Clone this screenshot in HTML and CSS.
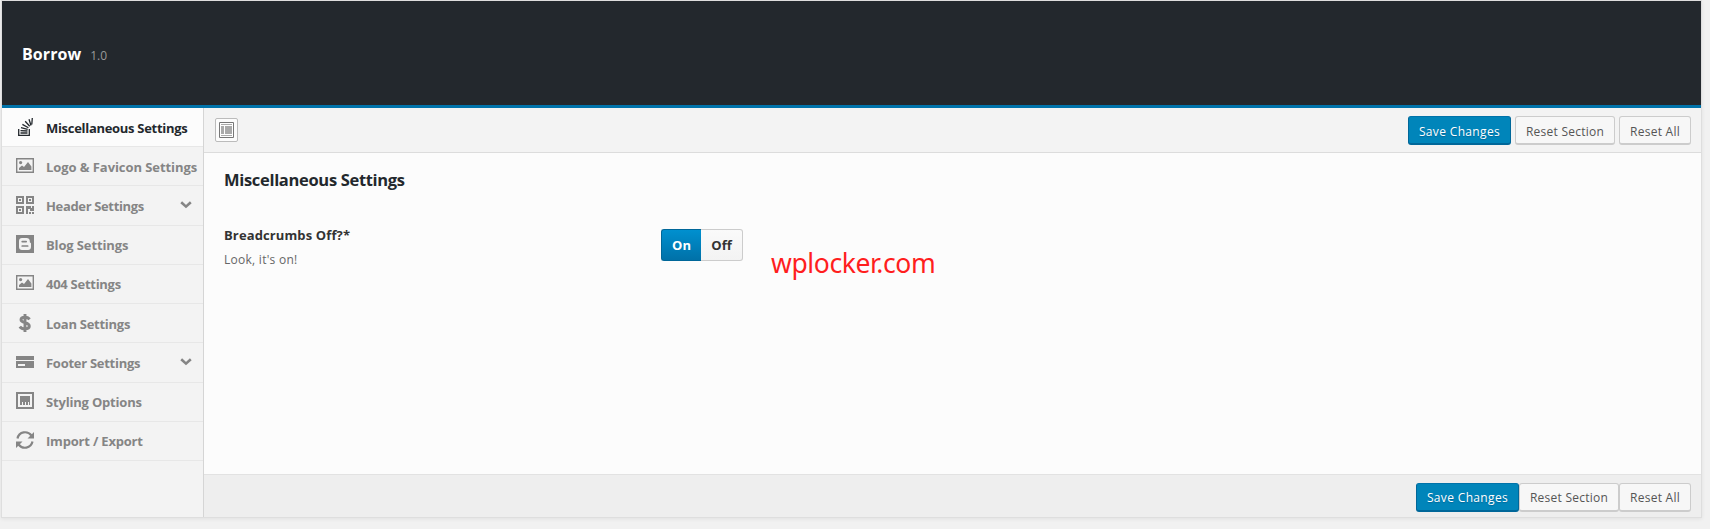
FILE: index.html
```html
<!DOCTYPE html>
<html lang="en">
<head>
<meta charset="utf-8">
<title>Borrow</title>
<link rel="stylesheet" href="styles.css">
</head>
<body>
<svg class="defs" width="0" height="0">
  <symbol id="picture" viewBox="0 0 18 16"><path fill-rule="evenodd" d="M0 0h18v15H0zM1.4 1.4v12.2h15.2V1.4z"/><circle cx="4.6" cy="4.6" r="1.6"/><path d="M3 12V10l3-2.4 2 1.4 4-5 3.4 4.6V12z"/></symbol>
  <symbol id="chevron" viewBox="0 0 12 8"><path d="M1.2 1.2 6 5.6l4.800-4.400" fill="none" stroke="currentColor" stroke-width="2.600"/></symbol>
</svg>
<div class="panel">
  <header class="top"><h1>Borrow</h1><span class="version">1.0</span></header>
  <div class="body">
    <ul class="menu">
      <li class="active"><svg class="icon" viewBox="0 0 18 18"><path d="M2.700 11v6.300h10.600V11M4.500 15h7M4.500 12.700l7 .3M5 9.700l6.700 1.700M6.400 6.400l6 3.300M9.200 3.200l4.500 5M13 1.200l2 6.300M16.300 0l-.5 6.500" fill="none" stroke="currentColor" stroke-width="1.300"/></svg><span class="m1">Miscellaneous Settings</span></li>
      <li><svg class="icon"><use href="#picture" width="18" height="16" y="1"/></svg><span class="m2">Logo &amp; Favicon Settings</span></li>
      <li><svg class="icon" viewBox="0 0 18 18"><path fill-rule="evenodd" d="M0 0h8v8H0zM2 2v4h4V2zM10 0h8v8h-8zM12 2v4h4V2zM0 10h8v8H0zM2 12v4h4v-4zM3 3h2v2H3zM13 3h2v2h-2zM3 13h2v2H3zM10 10h5v2h1v-2h2v5h-4v-2h-2v5h-2zM13 16h2v2h-2zM16 16h2v2h-2z"/></svg><span class="m3">Header Settings</span><svg class="chevron"><use href="#chevron"/></svg></li>
      <li><svg class="icon" viewBox="0 0 18 18"><path d="M0 0h18v18H0z"/><path class="cut" d="M6 3h4.500c2 0 3.300 1.300 3.300 3v1c0 .8 1.200.5 1.200 1.500V12c0 1.900-1.300 3-3 3H6c-1.800 0-3-1.200-3-3V6c0-1.800 1.200-3 3-3z"/><path d="M6.200 6.600h4M6.200 11h5.500" stroke="currentColor" stroke-width="1.700" stroke-linecap="round"/></svg><span class="m4">Blog Settings</span></li>
      <li><svg class="icon"><use href="#picture" width="18" height="16" y="1"/></svg><span class="m5">404 Settings</span></li>
      <li><svg class="icon" viewBox="0 0 18 18"><path d="M13.700 5.200C12.500 3.900 11 3.200 9 3.200c-2.300 0-4 .9-4 2.600 0 3.800 8.300 2 8.300 6.200 0 1.900-1.800 2.900-4.300 2.900-2.200 0-4.100-.7-5.200-2.300M9 0v18" fill="none" stroke="currentColor" stroke-width="2.900"/></svg><span class="m6">Loan Settings</span></li>
      <li><svg class="icon" viewBox="0 0 18 18"><path fill-rule="evenodd" d="M0 3h18v4H0zM0 8h18v7H0zM2 11v2h7v-2z"/></svg><span class="m7">Footer Settings</span><svg class="chevron"><use href="#chevron"/></svg></li>
      <li><svg class="icon" viewBox="0 0 18 18"><path fill-rule="evenodd" d="M0 0h18v17H0zM2 2v13h14V2z"/><path d="M4 4h10v9h-1v-3h-1v3h-2v-3H9v3H7v-3H6v3H4z"/></svg><span class="m8">Styling Options</span></li>
      <li><svg class="icon" viewBox="0 0 18 18"><path d="M1.500 7.500C3 .4 11.500-.6 15.500 4.500M16.500 10.500C15 17.600 6.500 18.600 2.500 13.500" fill="none" stroke="currentColor" stroke-width="2.200"/><path d="M18 1v6.500h-6.500zM0 17v-6.500h6.500z"/></svg><span class="m9">Import / Export</span></li>
    </ul>
    <main class="main">
      <div class="toolbar">
        <a class="expand"><svg width="15" height="16" viewBox="0 0 15 16"><path d="M.5.500h14v15H.5z" fill="#fff" stroke="#777"/><path d="M2 2h11v1H2zM2 4h3v8H2zM6 4h7v8H6zM2 13h11v1H2z" fill="#aaa"/></svg></a>
        <div class="buttons"><a class="btn primary">Save Changes</a><a class="btn section">Reset Section</a><a class="btn all">Reset All</a></div>
      </div>
      <section class="content">
        <h2>Miscellaneous Settings</h2>
        <div class="field">
          <div class="label"><h3>Breadcrumbs Off?*</h3><p>Look, it's on!</p></div>
          <div class="switch"><span class="on">On</span><span class="off">Off</span></div>
          <div class="mark">wplocker.com</div>
        </div>
      </section>
      <footer class="foot">
        <div class="buttons tight"><a class="btn primary">Save Changes</a><a class="btn section">Reset Section</a><a class="btn all">Reset All</a></div>
      </footer>
    </main>
  </div>
</div>
</body>
</html>
```
FILE: styles.css
```css
* { box-sizing: border-box; }
body { margin: 0; height: 529px; overflow: hidden; background: #f1f1f1; font-family: "Open Sans", "Noto Sans", sans-serif; font-size: 12px; white-space: nowrap; }
.defs { display: block; }
h1, h2, h3, p, ul { margin: 0; padding: 0; }
.panel { margin-left: 1px; width: 1701px; height: 518px; border: 1px solid #dedede; box-shadow: 0 1px 4px rgba(0,0,0,.07); }
.top { height: 107px; background: #23282d; border-bottom: 3px solid #0073aa; display: flex; align-items: baseline; gap: 9px; padding: 42px 0 0 20px; }
.top h1 { color: #fff; font-size: 16px; line-height: 22px; letter-spacing: .07px; }
.version { color: #999; font-size: 12px; }
.body { display: flex; height: 409px; }
.menu { width: 202px; background: #f3f3f3; border-right: 1px solid #d5d5d5; list-style: none; }
.menu li { height: 39.220px; border-bottom: 1px solid #e7e7e7; display: flex; align-items: center; padding: 1px 11px 0 14px; color: #858585; font-size: 13px; font-weight: 700; letter-spacing: -.27px; }
.menu li.active { padding-top: 2px; background: #fcfcfc; color: #23282d; }
.m1 { letter-spacing: -.3px; }
.m2 { letter-spacing: -.07px; }
.m3 { letter-spacing: -.35px; }
.m4 { letter-spacing: -.13px; }
.m8, .m9 { letter-spacing: -.19px; }
.icon { width: 18px; height: 18px; margin: -2px 12px 0 0; fill: currentColor; flex: none; }
.cut { fill: #f3f3f3; }
.chevron { width: 12px; height: 8px; margin: -2px 0 0 auto; }
.main { flex: 1; display: flex; flex-direction: column; background: #fcfcfc; }
.toolbar { height: 45px; background: #f3f3f3; border-bottom: 1px solid #dcdcdc; display: flex; justify-content: space-between; padding: 8px 10px 0 11px; }
.expand { width: 23px; height: 24px; margin-top: 2px; background: #fcfcfc; border: 1px solid #bbb; border-radius: 2px; display: flex; align-items: center; justify-content: center; }
.expand svg { flex: none; }
.buttons { display: flex; gap: 4px; }
.btn { width: 100px; height: 29px; border: 1px solid #ccc; border-bottom-width: 2px; border-radius: 3px; background: #f7f7f7; color: #555; text-align: center; line-height: 29px; font-size: 12px; letter-spacing: .25px; }
.btn.primary { width: 103px; background: #0085ba; border-color: #0073aa #006799 #006799; color: #fff; text-shadow: 0 1px 1px #006799; letter-spacing: .35px; }
.btn.all { width: 72px; }
.content { flex: 1; padding: 15px 20px; }
h2 { font-size: 16.5px; line-height: 24px; color: #23282d; letter-spacing: -.32px; }
.field { display: flex; padding-top: 31px; }
.label { width: 437px; }
h3 { font-size: 13px; line-height: 24px; color: #333; letter-spacing: .12px; }
.label p { margin-top: 1px; color: #666; line-height: 24px; letter-spacing: .27px; }
.switch { display: flex; width: 82px; height: 32px; margin-top: 6px; font-size: 13px; font-weight: 700; line-height: 31px; text-align: center; }
.on { width: 40px; color: #fff; background: linear-gradient(#0090cf, #0071a8); border: 1px solid #006799; border-right: 0; border-radius: 3px 0 0 3px; }
.off { width: 42px; color: #333; background: linear-gradient(#fafafa, #f3f3f3); border: 1px solid #ccc; border-left: 0; border-radius: 0 3px 3px 0; }
.mark { margin: 22px 0 0 28px; color: #ff1e1e; font-family: "Noto Sans", sans-serif; font-size: 26.5px; line-height: 36px; letter-spacing: -.4px; }
.foot { height: 43px; background: #eee; border-top: 1px solid #e2e2e2; display: flex; justify-content: flex-end; padding: 8px 10px 0 0; }
.tight { gap: 0; }
.tight .btn { line-height: 28px; }
```
